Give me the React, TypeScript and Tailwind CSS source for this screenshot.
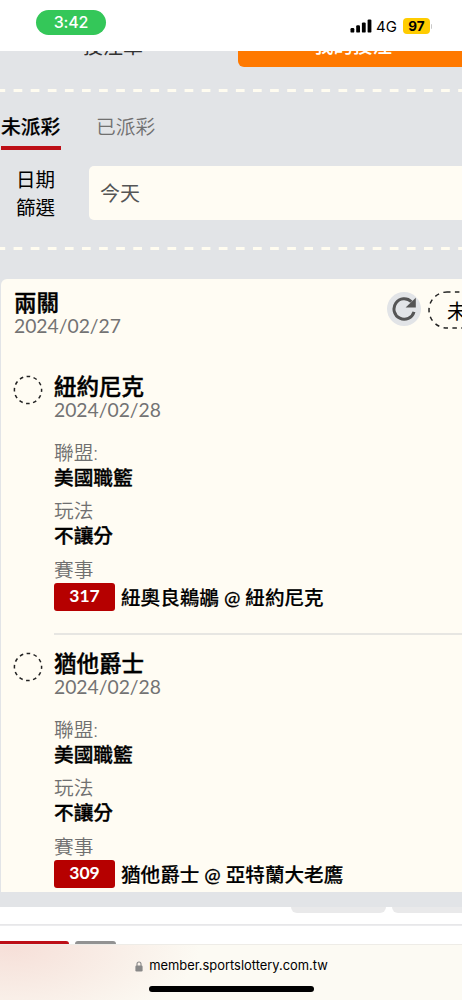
type Bet = { team: string; code: string; match: string };

const bets: Bet[] = [
  { team: '紐約尼克', code: '317', match: '紐奧良鵜鶘 @ 紐約尼克' },
  { team: '猶他爵士', code: '309', match: '猶他爵士 @ 亞特蘭大老鷹' },
];

function StatusBar() {
  return (
    <header className="flex h-[51px] shrink-0 items-start justify-between bg-white pl-9 pr-[30px] pt-[10px] font-[Inter,sans-serif]">
      <div className="flex h-[25px] w-[70px] items-center justify-center rounded-full bg-[#34c759] pb-px text-[16px] font-medium tracking-[-0.2px] text-white">
        3:42
      </div>
      <div className="mt-[6px] flex h-[20px] items-center">
        <svg width="22" height="14" viewBox="0 0 22 14" className="mr-[4px]">
          <rect x="0.5" y="9" width="3.8" height="4.6" rx="1.2" />
          <rect x="6.2" y="6.2" width="3.8" height="7.4" rx="1.2" />
          <rect x="11.9" y="3.4" width="3.8" height="10.2" rx="1.2" />
          <rect x="17.6" y="0.4" width="3.8" height="13.2" rx="1.2" />
        </svg>
        <span className="w-[27px] pt-px text-[15px] leading-5">4G</span>
        <span className="flex h-[16px] w-[27px] items-center justify-center rounded-[4px] bg-[#ffcc00] text-[13.5px] font-bold">
          97
        </span>
        <span className="ml-px h-[5px] w-px rounded-r bg-[#c8c8c8]" />
      </div>
    </header>
  );
}

function Dashes() {
  return (
    <svg className="block h-[3px] w-full shrink-0" viewBox="0 0 462 3">
      <line x1="-3.5" y1="1.5" x2="466" y2="1.5" stroke="#fffcf0" strokeWidth="3" strokeDasharray="8.7 8.4" />
    </svg>
  );
}

function Field({ label, value }: { label: string; value: string }) {
  return (
    <div className="mb-[10.5px] text-[19.7px] leading-6">
      <div className="font-[350] text-[#707070]">{label}</div>
      <div className="pt-px -mb-px font-medium [-webkit-text-stroke:0.35px_black]">{value}</div>
    </div>
  );
}

function BetItem({ bet }: { bet: Bet }) {
  return (
    <article className="flex">
      <svg className="mt-px block size-[30px] shrink-0" viewBox="0 0 30 30" fill="none" stroke="#222" strokeWidth="1.5">
        <circle cx="15" cy="15" r="13.6" strokeDasharray="3.7 3.42" strokeDashoffset="1.85" />
      </svg>
      <div className="ml-[11px] flex-1">
        <h3 className="h-6 pt-px text-[22.5px] font-medium leading-6 [-webkit-text-stroke:0.4px_black]">{bet.team}</h3>
        <p className="h-6 text-[19.3px] leading-6 text-[#737373]">2024/02/28</p>
        <div className="mt-[18.5px]">
          <Field label="聯盟:" value="美國職籃" />
          <Field label="玩法" value="不讓分" />
          <div className="text-[19.7px] font-[350] leading-6 text-[#707070]">賽事</div>
          <div className="mt-px flex h-7 items-center whitespace-nowrap">
            <span className="flex h-7 w-[61px] items-center justify-center rounded-[3px] bg-[#b60000] text-[17.5px] font-bold text-white">
              {bet.code}
            </span>
            <span className="ml-[6px] pt-[2px] text-[19.6px] font-medium leading-7 [-webkit-text-stroke:0.2px_black]">{bet.match}</span>
          </div>
        </div>
      </div>
    </article>
  );
}

export default function App() {
  return (
    <div className="flex h-[1000px] w-[462px] flex-col overflow-hidden bg-[#e2e4e7] font-['Lato','Noto_Sans_CJK_TC',sans-serif] text-black">
      <StatusBar />

      <div className="flex h-[38px] shrink-0 items-start overflow-hidden">
        <div className="flex h-4 w-[238px] items-end overflow-hidden pl-[83px]">
          <span className="mb-[11px] text-[20px] leading-5 text-[#333]">投注單</span>
        </div>
        <div className="flex h-4 w-[224px] items-end rounded-bl-[6px] bg-[#ff7900] pl-[76px] text-white">
          <div className="flex h-4 items-end overflow-hidden">
            <span className="mb-[11px] text-[19.5px] font-medium leading-5">我的投注</span>
          </div>
        </div>
      </div>
      <Dashes />

      <nav className="flex h-[58px] shrink-0 items-end gap-[35px] pl-px text-[19.8px]">
        <div className="h-[38px] w-[60px] whitespace-nowrap border-b-4 border-[#bd0f17] font-medium leading-7 [-webkit-text-stroke:0.2px_black]">
          未派彩
        </div>
        <div className="h-[38px] font-[350] leading-7 text-[#707070]">已派彩</div>
      </nav>

      <div className="flex h-[97px] shrink-0 items-start pt-[16px]">
        <div className="w-[73px] pl-[16px] text-[19.5px] leading-[28px]">
          日期
          <br />
          篩選
        </div>
        <div className="ml-4 flex h-[54px] flex-1 items-center rounded-l-[5px] bg-[#fffcf3] pl-[11px] text-[20px] text-[#555]">
          今天
        </div>
      </div>
      <Dashes />

      <main className="ml-px mt-[29px] h-[613px] shrink-0 overflow-hidden rounded-tl-[6px] bg-[#fffcf3] pl-3 pt-[11px]">
        <div className="flex justify-between">
          <div className="pl-px">
            <h2 className="h-6 pt-px text-[22.5px] font-medium leading-6 [-webkit-text-stroke:0.4px_black]">兩關</h2>
            <p className="h-6 text-[19.3px] leading-6 text-[#737373]">2024/02/27</p>
          </div>
          <div className="flex">
            <button className="mt-[2px] flex size-[34px] items-center justify-center rounded-full bg-[#e2e4e7]">
              <svg width="24" height="24" viewBox="0 0 24 24" fill="none">
                <path d="M22 14.8A10.2 10.2 0 1 1 19.4 4.8" stroke="#555" strokeWidth="3" />
                <path d="M23.8 0.7V10.5H13.6z" fill="#555" />
              </svg>
            </button>
            <div className="ml-[7px] w-[34px] overflow-hidden">
              <div className="relative mt-px flex h-[38px] w-[90px] items-center pl-[19px] pt-px text-[20px]">
                <svg className="absolute inset-0" width="90" height="38" viewBox="0 0 90 38" fill="none" stroke="#222" strokeWidth="1.5">
                  <rect x="1" y="1" width="88" height="36" rx="18" strokeDasharray="4.5 4.4" strokeDashoffset="1" />
                </svg>
                <span className="whitespace-nowrap">未派彩</span>
              </div>
            </div>
          </div>
        </div>

        <div className="mt-[36px]">
          <BetItem bet={bets[0]} />
          <hr className="ml-[41px] mt-[22.5px] border-t-2 border-[#e7e6e2]" />
          <div className="mt-4">
            <BetItem bet={bets[1]} />
          </div>
        </div>
      </main>

      <div className="h-[15px] shrink-0" />
      <div className="flex h-[18px] shrink-0 items-start gap-[6px] border-b border-[#e7e7e9] bg-white pl-[291px]">
        <div className="h-[6px] w-[95px] rounded-b-[6px] bg-[#e9e9ea]" />
        <div className="h-[6px] flex-1 rounded-bl-[6px] bg-[#e9e9ea]" />
      </div>
      <div className="flex h-[19px] shrink-0 items-end gap-[6px] border-t border-[#ececee] bg-white">
        <div className="h-[3px] w-[69px] rounded-tr-[3px] bg-[#bd0f17]" />
        <div className="h-[3px] w-[41px] rounded-t-[3px] bg-[#929292]" />
      </div>

      <footer className="flex flex-1 flex-col items-center border-t border-[#eeece7] bg-[#fcfaf3] bg-[radial-gradient(ellipse_190px_90px_at_10px_0px,#f6dfd8_0%,#f8ebe4_45%,#fcfaf3_100%)] pt-[11px] font-[Inter,sans-serif]">
        <div className="flex h-5 items-center pl-px">
          <svg width="8" height="11" viewBox="0 0 8 11" className="mr-[6px]">
            <path d="M2 5V3a2 2 0 0 1 4 0v2" fill="none" stroke="#888" strokeWidth="1.1" />
            <rect x="0.4" y="4.5" width="7.2" height="6" rx="1.2" fill="#888" />
          </svg>
          <span className="text-[12.9px] leading-5">member.sportslottery.com.tw</span>
        </div>
        <div className="ml-px mt-[10px] h-[6px] w-[165px] rounded-full bg-black" />
      </footer>
    </div>
  );
}
